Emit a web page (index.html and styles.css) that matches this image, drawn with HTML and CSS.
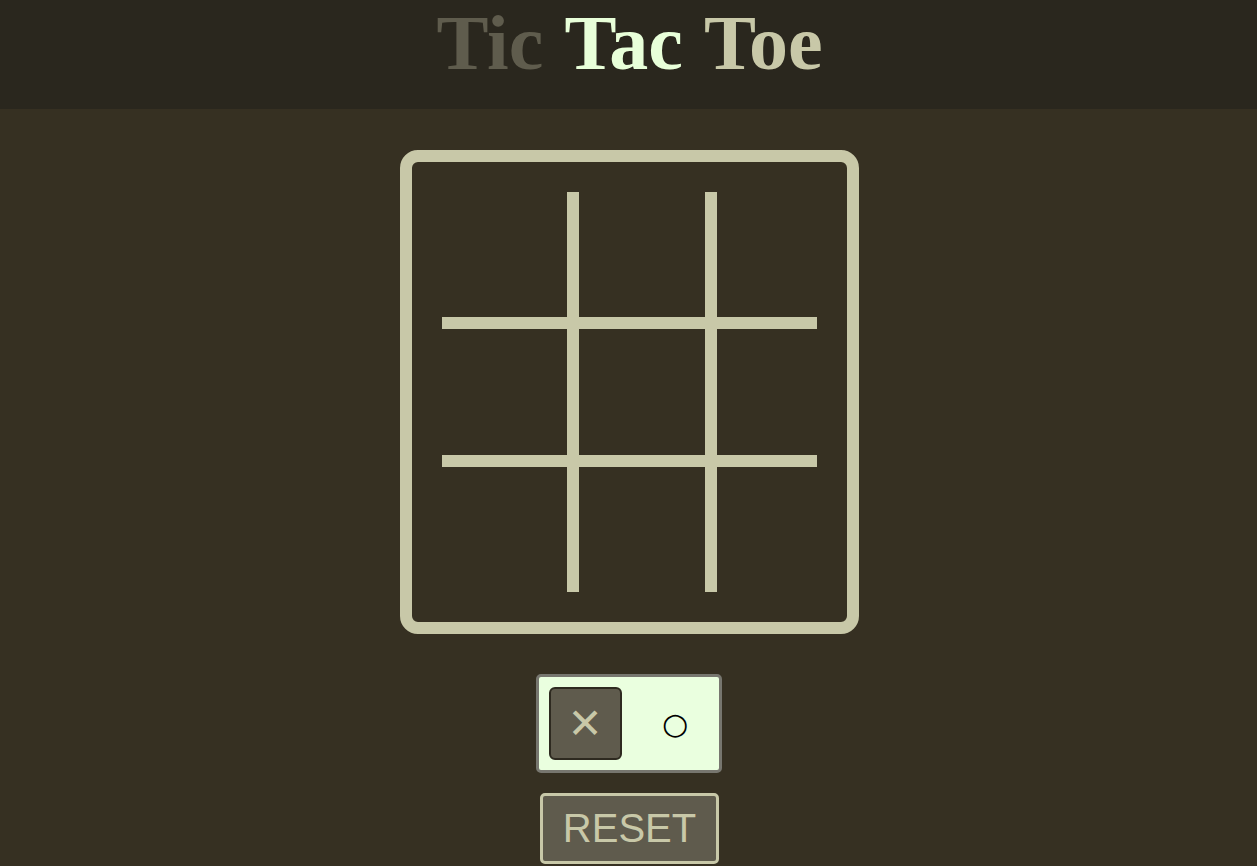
FILE: index.html
```html
<!DOCTYPE html>
<html>
<head>
<meta charset="utf-8">
<title>Tic Tac Toe</title>
<link rel="stylesheet" href="styles.css">
</head>
<body>
<header class="top">
  <h1 class="title"><span class="tic">Tic</span> <span class="tac">Tac</span> <span class="toe">Toe</span></h1>
</header>
<main class="main">
  <div class="board">
    <div class="grid">
      <div class="vline v1"></div>
      <div class="vline v2"></div>
      <div class="hline h1"></div>
      <div class="hline h2"></div>
    </div>
  </div>
  <div class="toggle">
    <button class="pick pick-x">✕</button>
    <button class="pick pick-o">○</button>
  </div>
  <button class="reset">RESET</button>
</main>
</body>
</html>
```

FILE: styles.css
```css
html, body {
  margin: 0;
  padding: 0;
  background: #363022;
  height: 100%;
}
body {
  font-family: "Liberation Sans", Arial, sans-serif;
  overflow: hidden;
}
.top {
  height: 109px;
  background: #2a271e;
  display: flex;
  justify-content: center;
  align-items: flex-start;
}
.title {
  margin: 0 0 0 2px;
  padding-top: 0;
  font-family: "Liberation Serif", "Times New Roman", serif;
  font-weight: bold;
  font-size: 78px;
  line-height: 86px;
  word-spacing: 3px;
  white-space: nowrap;
}
.tic { color: #5f5c4d; }
.tac { color: #e8ffd9; }
.toe { color: #c8c8a8; }
.main {
  display: flex;
  flex-direction: column;
  align-items: center;
  padding-top: 41px;
}
.board {
  border: 12px solid #c8c8a8;
  border-radius: 18px;
  padding: 30px;
  margin-left: 1px;
}
.grid {
  display: grid;
  grid-template-columns: 125px 12px 126px 12px 100px;
  grid-template-rows: 125px 12px 126px 12px 125px;
}
.vline, .hline { background: #c8c8a8; }
.v1 { grid-column: 2; grid-row: 1 / -1; }
.v2 { grid-column: 4; grid-row: 1 / -1; }
.h1 { grid-row: 2; grid-column: 1 / -1; }
.h2 { grid-row: 4; grid-column: 1 / -1; }
.toggle {
  margin-top: 40px;
  display: flex;
  gap: 17px;
  padding: 10px 7px 10px 10px;
  background: #eaffdf;
  border: 3px solid #77766f;
  border-radius: 5px;
}
.pick {
  width: 73px;
  height: 73px;
  padding: 0;
  border-radius: 6px;
  font-family: "DejaVu Sans", sans-serif;
  display: flex;
  align-items: center;
  justify-content: center;
  cursor: pointer;
}
.pick-x {
  background: #5f5b4d;
  border: 2px solid #2e2a20;
  color: #c8c8a8;
  font-size: 42px;
}
.pick-o {
  background: transparent;
  border: 2px solid transparent;
  color: #000;
  font-size: 30px;
}
.reset {
  margin-top: 20px;
  margin-left: 2px;
  background: #5f5b4d;
  border: 3px solid #c8c8a8;
  border-radius: 5px;
  color: #c8c8a8;
  font-family: "Liberation Sans", Arial, sans-serif;
  font-size: 40px;
  line-height: 46px;
  padding: 9px 20px 10px;
  cursor: pointer;
}
```
